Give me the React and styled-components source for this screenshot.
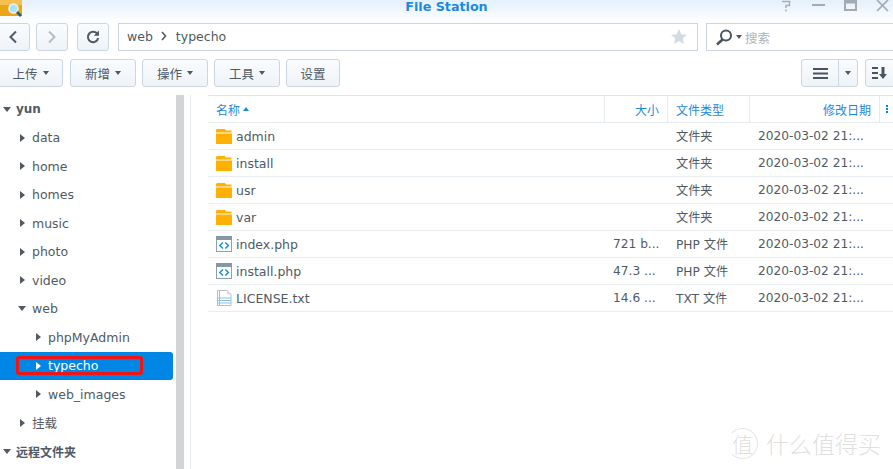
import React from 'react';
import styled, { createGlobalStyle } from 'styled-components';

const Global = createGlobalStyle`
    html, body { margin: 0; padding: 0; background: #fff; }
    * { box-sizing: border-box; }
`

const FONT = `"DejaVu Sans", "Noto Sans CJK SC", sans-serif`
const COLUMNS = '397px 63px 82px 130px 1fr'

const Page = styled.div`
    position: relative;
    width: 893px;
    height: 469px;
    overflow: hidden;
    background: #fff;
    font-family: ${FONT};
    font-size: 12.5px;
    color: #505a64;`

const TitleBar = styled.div`
    position: relative;
    display: flex;
    justify-content: space-between;
    height: 23px;
    background: linear-gradient(#e4f0fb, #ffffff);`

const Logo = styled.svg`
    display: block;
    width: 24px;
    height: 17px;`

const Title = styled.div`
    position: absolute;
    left: 0;
    right: 0;
    top: -1px;
    text-align: center;
    font-weight: bold;
    font-size: 12.7px;
    line-height: 15px;
    color: #1a8ae0;`

const WinButtons = styled.div`
    display: flex;
    align-items: flex-start;
    gap: 19px;
    padding-right: 4px;`

const WinIcon = styled.svg`
    display: block;
    width: 13px;
    height: 12px;`

const Row = styled.div`
    display: flex;
    align-items: stretch;
    height: 28px;
    margin-bottom: 8px;`

const Btn = styled.button`
    display: flex;
    align-items: center;
    justify-content: center;
    gap: 5px;
    width: ${p => p.$w}px;
    margin: 0 ${p => p.$mr || 0}px 0 ${p => p.$ml || 0}px;
    padding: 0;
    flex: none;
    border: 1px solid #cbd6e2;
    border-radius: 3px;
    background: linear-gradient(#fafcfe, #eef3f8);
    font-family: ${FONT};
    font-size: 12.5px;
    color: #505a64;`

const Caret = styled.span`
    width: 0;
    height: 0;
    border-left: 3.5px solid transparent;
    border-right: 3.5px solid transparent;
    border-top: 4px solid #505a64;`

const PathBar = styled.div`
    display: flex;
    flex: none;
    align-items: center;
    width: 580px;
    margin-left: 9px;
    padding: 0 10px 2px 8px;
    border: 1px solid #cbd6e2;
    color: #505a64;
    gap: 8px;`

const Spacer = styled.div`
    flex: 1;`

const SearchBox = styled.div`
    display: flex;
    align-items: center;
    flex: none;
    width: 200px;
    margin-left: 8px;
    padding-left: 8px;
    gap: 3px;
    border: 1px solid #cbd6e2;
    font-size: 12.5px;
    color: #aab4be;`

const Split = styled.div`
    display: flex;
    flex: none;
    width: 57px;
    margin-left: auto;
    border: 1px solid #cbd6e2;
    border-radius: 3px;
    background: linear-gradient(#fafcfe, #eef3f8);`

const SplitMain = styled.div`
    display: flex;
    align-items: center;
    justify-content: center;
    width: 37px;
    border-right: 1px solid #cbd6e2;`

const SplitSide = styled.div`
    display: flex;
    align-items: center;
    justify-content: center;
    flex: 1;`

const Body = styled.div`
    display: flex;
    height: 374px;`

const Sidebar = styled.div`
    width: 173px;
    flex: none;`

const TreeRow = styled.div`
    position: relative;
    display: flex;
    align-items: center;
    height: 28.5px;
    padding-left: ${p => p.$indent}px;
    gap: ${p => p.$gap || 7}px;
    border-radius: 0 3px 3px 0;
    font-weight: ${p => p.$bold ? 'bold' : 'normal'};
    font-size: ${p => p.$bold ? 12 : 12.5}px;
    background: ${p => p.$active ? '#0086e5' : 'transparent'};
    color: ${p => p.$active ? '#fff' : '#505a64'};`

const ArrowRight = styled.span`
    flex: none;
    width: 0;
    height: 0;
    border-top: 4px solid transparent;
    border-bottom: 4px solid transparent;
    border-left: 5px solid ${p => p.$active ? '#fff' : '#505a64'};`

const ArrowDown = styled.span`
    flex: none;
    width: 0;
    height: 0;
    border-left: 4px solid transparent;
    border-right: 4px solid transparent;
    border-top: 5px solid #505a64;`

const Highlight = styled.div`
    position: absolute;
    left: 16px;
    top: 4px;
    width: 127px;
    height: 19px;
    border: 3px solid #f01414;
    border-radius: 3px;`

const ScrollTrack = styled.div`
    flex: none;
    width: 15px;
    margin-left: 3px;
    border-right: 1px solid #e6e9ec;`

const ScrollThumb = styled.div`
    width: 8px;
    height: 100%;
    background: #d2d4d6;`

const ListPane = styled.div`
    flex: 1;
    margin-left: 17px;`

const HeaderRow = styled.div`
    display: grid;
    grid-template-columns: ${COLUMNS};
    height: 28px;
    border-top: 1px solid #dce4ec;
    border-bottom: 1px solid #e6ebf0;
    color: #1a8ae0;
    font-size: 12px;`

const HeadCell = styled.div`
    display: flex;
    align-items: center;
    justify-content: ${p => p.$right ? 'flex-end' : 'flex-start'};
    gap: 3px;
    padding: 0 8px;
    border-right: 1px solid #e6ebf0;`

const UpCaret = styled.span`
    width: 0;
    height: 0;
    border-left: 3.5px solid transparent;
    border-right: 3.5px solid transparent;
    border-bottom: 4px solid #1a8ae0;`

const Dots = styled.div`
    display: flex;
    flex-direction: column;
    align-items: center;
    justify-content: center;
    gap: 1px;
    span {
        width: 2px;
        height: 2px;
        background: #0086e5;
    }`

const FileRow = styled.div`
    display: grid;
    grid-template-columns: ${COLUMNS};
    height: 27px;
    border-bottom: 1px solid #e8edf2;`

const Cell = styled.div`
    display: flex;
    align-items: center;
    gap: 4px;
    padding: 0 8px;
    white-space: nowrap;
    overflow: hidden;
    font-size: ${p => p.$small ? 12.2 : 12.5}px;`

const Watermark = styled.div`
    position: absolute;
    left: 727px;
    top: 426px;
    display: flex;
    align-items: center;
    gap: 8px;
    font-family: "Noto Sans CJK SC", sans-serif;
    font-size: 23px;
    font-weight: 300;
    color: #dfdfdf;`

const Stamp = styled.span`
    display: flex;
    align-items: center;
    justify-content: center;
    width: 31px;
    height: 31px;
    border: 1.5px solid #e6e6e6;
    border-left-color: transparent;
    border-radius: 50%;
    font-size: 21px;`

const FolderIcon = () => (
    <svg width="16" height="15" viewBox="0 0 16 15">
        <path d="M1 0h8l1 1.500h5.500V3.500H0V1z" fill="#ffb000" />
        <rect x="0" y="4.500" width="16" height="10.500" fill="#ffb000" />
    </svg>
);

const CodeIcon = () => (
    <svg width="16" height="16" viewBox="0 0 16 16">
        <rect x="0.5" y="0.5" width="15" height="15" fill="#fff" stroke="#8ba0b0" />
        <rect x="0" y="0" width="16" height="4" fill="#8598a6" />
        <path d="M7 6.500L3.800 9.500 7 12.500M9.300 6.500L12.500 9.500 9.300 12.500" fill="none" stroke="#0f8ce0" strokeWidth="1.400" />
    </svg>
);

const TextIcon = () => (
    <svg width="16" height="16" viewBox="0 0 16 16">
        <path d="M1.500.5H11l4 4v11H1.500z" fill="#fff" stroke="#b4bec8" />
        <path d="M11 .5v4h4z" fill="#d4dae0" />
        <path d="M1.500 8h13.500M1.500 10.500h13.500M1.500 13h13.500" stroke="#8ec0e8" />
        <path d="M3.500 1v14" stroke="#eda0a0" />
    </svg>
);

const topFolders = ['data', 'home', 'homes', 'music', 'photo', 'video'];

const files = [
    { name: 'admin', kind: 'folder', size: '', type: '文件夹' },
    { name: 'install', kind: 'folder', size: '', type: '文件夹' },
    { name: 'usr', kind: 'folder', size: '', type: '文件夹' },
    { name: 'var', kind: 'folder', size: '', type: '文件夹' },
    { name: 'index.php', kind: 'code', size: '721 b...', type: 'PHP 文件' },
    { name: 'install.php', kind: 'code', size: '47.3 ...', type: 'PHP 文件' },
    { name: 'LICENSE.txt', kind: 'text', size: '14.6 ...', type: 'TXT 文件' },
];

const icons = { folder: <FolderIcon />, code: <CodeIcon />, text: <TextIcon /> };

const App = () => (
    <Page>
        <Global />
        <TitleBar>
            <Logo viewBox="0 0 24 17">
                <path d="M0 0h22v16H0z" fill="#eca514" />
                <path d="M0 0h22v5H0z" fill="#f5c050" />
                <circle cx="13.500" cy="8.500" r="4.500" fill="#a8e4f8" stroke="#e8f4f8" strokeWidth="1.500" />
                <path d="M17 12l4 4" stroke="#2a5a70" strokeWidth="2.500" />
            </Logo>
            <Title>File Station</Title>
            <WinButtons>
                <WinIcon viewBox="0 0 13 12">
                    <path d="M2 1.500h7.500v4H6V8M6 9.500v2" fill="none" stroke="#aab0b6" strokeWidth="1.500" />
                </WinIcon>
                <WinIcon viewBox="0 0 13 12">
                    <path d="M0 5h13" stroke="#a4aab0" strokeWidth="2" />
                </WinIcon>
                <WinIcon viewBox="0 0 13 12">
                    <path d="M1 1h11v9H1z" fill="none" stroke="#a4aab0" strokeWidth="2" />
                    <path d="M1 2.500h11" stroke="#a4aab0" strokeWidth="2" />
                </WinIcon>
                <WinIcon viewBox="0 0 13 12">
                    <path d="M1 0l11 11M12 0L1 11" stroke="#a4aab0" strokeWidth="1.700" />
                </WinIcon>
            </WinButtons>
        </TitleBar>

        <Row>
            <Btn $w={34} $ml={-4}>
                <svg width="10" height="14" viewBox="0 0 10 14"><path d="M8 1.500L2.500 7 8 12.500" fill="none" stroke="#505a64" strokeWidth="2" /></svg>
            </Btn>
            <Btn $w={32} $ml={6}>
                <svg width="10" height="14" viewBox="0 0 10 14"><path d="M2 1.500L7.500 7 2 12.500" fill="none" stroke="#b4bcc4" strokeWidth="2" /></svg>
            </Btn>
            <Btn $w={32} $ml={9}>
                <svg width="14" height="14" viewBox="0 0 14 14"><path d="M11.500 4.200A5.200 5.200 0 1 0 12.200 8" fill="none" stroke="#505a64" strokeWidth="2" /><path d="M13 0.500v5.200H7.800z" fill="#505a64" /></svg>
            </Btn>
            <PathBar>
                <span>web</span>
                <svg width="7" height="10" viewBox="0 0 7 10"><path d="M1 1l3.500 4L1 9" fill="none" stroke="#505a64" strokeWidth="1.600" /></svg>
                <span>typecho</span>
                <Spacer />
                <svg width="16" height="15" viewBox="0 0 16 15"><path d="M8 0l2.300 5.200 5.700.5-4.300 3.800 1.300 5.500L8 12l-5 3 1.300-5.500L0 5.700l5.700-.5z" fill="#d4dbe3" /></svg>
            </PathBar>
            <SearchBox>
                <svg width="18" height="17" viewBox="0 0 18 17"><circle cx="11" cy="6.500" r="5" fill="none" stroke="#4a545e" strokeWidth="2" /><path d="M7.500 10.500L2 15.500" stroke="#4a545e" strokeWidth="2.600" /></svg>
                <Caret />
                <span>搜索</span>
            </SearchBox>
        </Row>

        <Row>
            <Btn $w={65} $ml={-2}>上传 <Caret /></Btn>
            <Btn $w={66} $ml={7}>新增 <Caret /></Btn>
            <Btn $w={66} $ml={6}>操作 <Caret /></Btn>
            <Btn $w={66} $ml={6}>工具 <Caret /></Btn>
            <Btn $w={54} $ml={6}>设置</Btn>
            <Split>
                <SplitMain>
                    <svg width="15" height="11" viewBox="0 0 15 11"><path d="M0 1h15M0 5.500h15M0 10h15" stroke="#4a545e" strokeWidth="2" /></svg>
                </SplitMain>
                <SplitSide><Caret /></SplitSide>
            </Split>
            <Btn $w={30} $ml={7} $mr={-2}>
                <svg width="17" height="13" viewBox="0 0 17 13"><path d="M0 1h6M0 6h6M0 11h6" stroke="#4a545e" strokeWidth="2" /><path d="M11 0v8" stroke="#4a545e" strokeWidth="3" /><path d="M7 7h8l-4 5z" fill="#4a545e" /></svg>
            </Btn>
        </Row>

        <Body>
            <Sidebar>
                <TreeRow $indent={3} $gap={5} $bold><ArrowDown />yun</TreeRow>
                {topFolders.map(label => (
                    <TreeRow key={label} $indent={20}><ArrowRight />{label}</TreeRow>
                ))}
                <TreeRow $indent={18} $gap={6}><ArrowDown />web</TreeRow>
                <TreeRow $indent={36}><ArrowRight />phpMyAdmin</TreeRow>
                <TreeRow $indent={36} $active>
                    <ArrowRight $active />typecho
                    <Highlight />
                </TreeRow>
                <TreeRow $indent={36}><ArrowRight />web_images</TreeRow>
                <TreeRow $indent={20}><ArrowRight />挂载</TreeRow>
                <TreeRow $indent={3} $gap={5} $bold><ArrowDown />远程文件夹</TreeRow>
            </Sidebar>
            <ScrollTrack><ScrollThumb /></ScrollTrack>
            <ListPane>
                <HeaderRow>
                    <HeadCell>名称 <UpCaret /></HeadCell>
                    <HeadCell $right>大小</HeadCell>
                    <HeadCell>文件类型</HeadCell>
                    <HeadCell $right>修改日期</HeadCell>
                    <Dots><span /><span /><span /></Dots>
                </HeaderRow>
                {files.map(f => (
                    <FileRow key={f.name}>
                        <Cell>{icons[f.kind]}{f.name}</Cell>
                        <Cell $small>{f.size}</Cell>
                        <Cell $small>{f.type}</Cell>
                        <Cell $small>2020-03-02 21:...</Cell>
                        <div />
                    </FileRow>
                ))}
            </ListPane>
        </Body>
        <Watermark><Stamp>值</Stamp>什么值得买</Watermark>
    </Page>
);

export default App;
